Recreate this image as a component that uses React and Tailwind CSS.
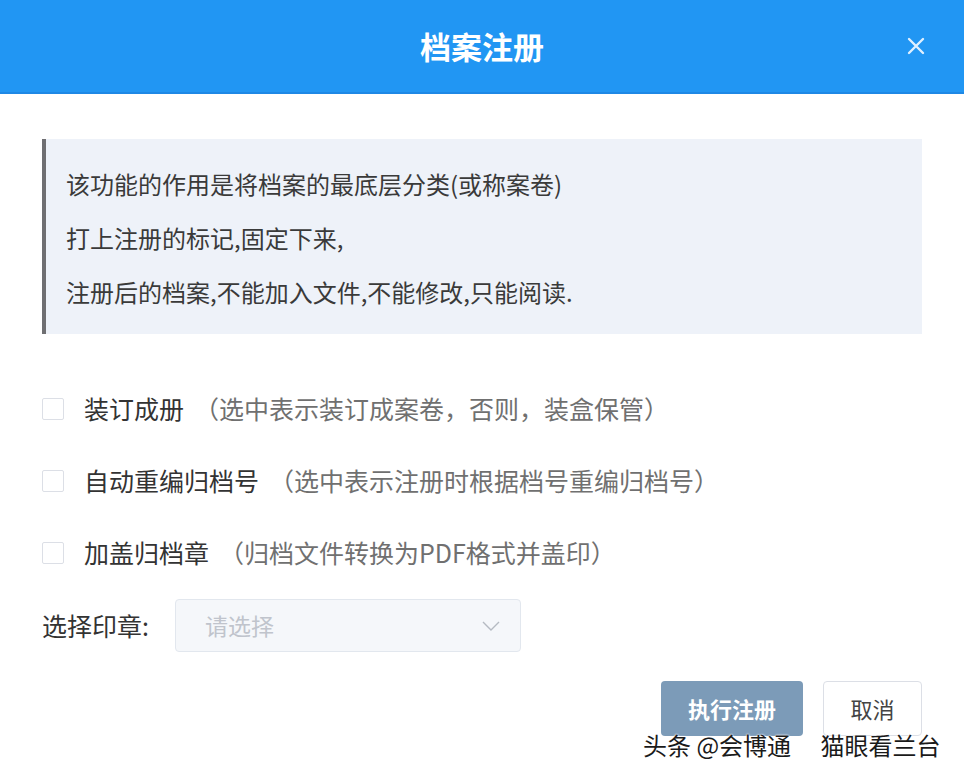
import React from 'react'

const font = { fontFamily: '"Noto Sans CJK SC", "Noto Sans", sans-serif' }

const options = [
  { label: '装订成册', hint: '（选中表示装订成案卷，否则，装盒保管）' },
  { label: '自动重编归档号', hint: '（选中表示注册时根据档号重编归档号）' },
  { label: '加盖归档章', hint: '（归档文件转换为PDF格式并盖印）' },
]

const App = () => {
  return (
    <div style={font} className="relative w-[964px] h-[780px] bg-white overflow-hidden">
      {/* header */}
      <div className="grid grid-cols-[1fr_auto_1fr] items-center h-[94px] bg-[#2196f3] border-b-2 border-[#1e88e5]">
        <div></div>
        <h1 className="text-[31px] font-bold text-white">档案注册</h1>
        <div className="flex justify-end pr-[38px]">
          <svg width="20" height="20" viewBox="0 0 20 20" fill="none" stroke="#dff0ff" strokeWidth="2.4" strokeLinecap="round">
            <path d="M3 3L17 17M17 3L3 17" />
          </svg>
        </div>
      </div>

      <div className="px-[42px]">
        {/* info */}
        <div className="mt-[45px] h-[195px] border-l-4 border-[#6f6f72] bg-[#eef2f9] pl-[20px] pt-[18px] text-[24px] leading-[54px] text-[#3a3a3a]">
          <p>该功能的作用是将档案的最底层分类(或称案卷)</p>
          <p>打上注册的标记,固定下来,</p>
          <p>注册后的档案,不能加入文件,不能修改,只能阅读.</p>
        </div>

        {/* checkboxes */}
        <div className="mt-[39px]">
          {options.map((o) => (
            <label key={o.label} className="flex items-center h-[72px]">
              <span className="w-[22px] h-[22px] border border-[#dcdfe6] rounded-[2px] bg-white"></span>
              <span className="ml-[20px] text-[25px] text-[#333]">{o.label}</span>
              <span className="ml-[10px] text-[25px] text-[#707070]">{o.hint}</span>
            </label>
          ))}
        </div>

        {/* select */}
        <div className="mt-[10px] flex items-center">
          <span className="w-[133px] text-[25px] text-[#333]">选择印章:</span>
          <div className="flex items-center justify-between w-[346px] h-[53px] rounded-[4px] border border-[#e2e7ee] bg-[#f5f7fa] pl-[29px] pr-[20px]">
            <span className="text-[23px] text-[#c0c4cc]">请选择</span>
            <svg width="18" height="10" viewBox="0 0 18 10" fill="none" stroke="#b5bac2" strokeWidth="1.4">
              <path d="M1 1L9 9L17 1" />
            </svg>
          </div>
        </div>

        {/* buttons */}
        <div className="mt-[29px] flex justify-end gap-[20px]">
          <button className="w-[142px] h-[55px] rounded-[4px] bg-[#7c9bb8] text-[22px] font-bold text-white">执行注册</button>
          <button className="w-[99px] h-[55px] rounded-[4px] border border-[#dcdfe6] bg-white text-[22px] text-[#444]">取消</button>
        </div>
      </div>

      {/* watermark */}
      <div className="absolute left-[643px] top-[727px] text-[24px] text-[#1a1a1a] whitespace-pre [text-shadow:0_0_2px_#fff,0_0_2px_#fff,1px_1px_1px_#fff]">
        头条 @会博通　 猫眼看兰台
      </div>
    </div>
  )
}

export default App
